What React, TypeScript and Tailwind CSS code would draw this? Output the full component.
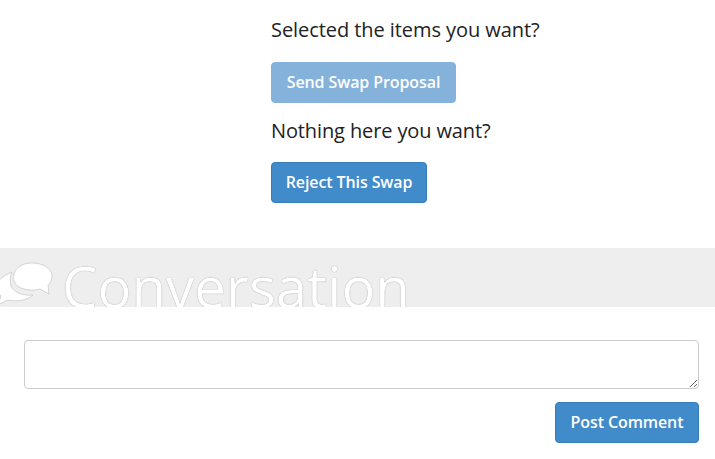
import React from 'react';

function BubblesIcon() {
  return (
    <svg width="54" height="44" viewBox="0 0 54 44" className="shrink-0 mt-[14px]" fill="#fff" stroke="#c4c4c4" strokeWidth="0.7">
      <path d="M12 10 C3 14 -3 18 -3 25 C-3 29 -1 32 1 34 L-2 43 L8 38 C18 40 28 38 33 33 C24 34 14 31 11 24 C10 18 10 14 12 10 Z" />
      <path d="M32 1 C42 1 52 6 52 14 C52 18 50 21 48 23 L49 32 L40 27 C34 29 24 28 19 25 C14 22 13 17 14 12 C16 5 23 1 32 1 Z" />
    </svg>
  );
}

function BlueButton({ label, width, faded }: { label: string; width: string; faded?: boolean }) {
  return (
    <button
      className={
        'block h-[41px] pb-[1px] rounded-[4px] border text-[16px] font-semibold tracking-[-0.1px] text-white ' +
        width +
        ' ' +
        (faded ? 'bg-[#84b2da] border-[#84b2da]' : 'bg-[#428bca] border-[#357ebd]')
      }
    >
      {label}
    </button>
  );
}

export default function App() {
  return (
    <div className="w-[715px] h-[459px] overflow-hidden bg-white text-[#222] font-['Open_Sans',sans-serif]">
      <div className="pl-[271px] pt-[16px]">
        <p className="text-[20px] leading-[28px] tracking-[-0.07px]">Selected the items you want?</p>
        <div className="mt-[18px]">
          <BlueButton label="Send Swap Proposal" width="w-[185px]" faded />
        </div>
        <p className="text-[20px] leading-[28px] tracking-[-0.12px] mt-[14px]">Nothing here you want?</p>
        <div className="mt-[17px]">
          <BlueButton label="Reject This Swap" width="w-[156px]" />
        </div>
      </div>

      <div className="mt-[45px] h-[59px] bg-[#eeeeee] overflow-hidden flex gap-[8px]">
        <BubblesIcon />
        <h2 className="text-[56.4px] leading-[78px] text-white whitespace-nowrap [text-shadow:0_0_1px_#808080]">
          Conversation
        </h2>
      </div>

      <div className="pl-[24px] pr-[16px] pt-[33px]">
        <textarea className="block w-full h-[49px] rounded-[4px] border border-[#ccc] bg-white" />
        <div className="flex justify-end mt-[13px]">
          <BlueButton label="Post Comment" width="w-[144px]" />
        </div>
      </div>
    </div>
  );
}
